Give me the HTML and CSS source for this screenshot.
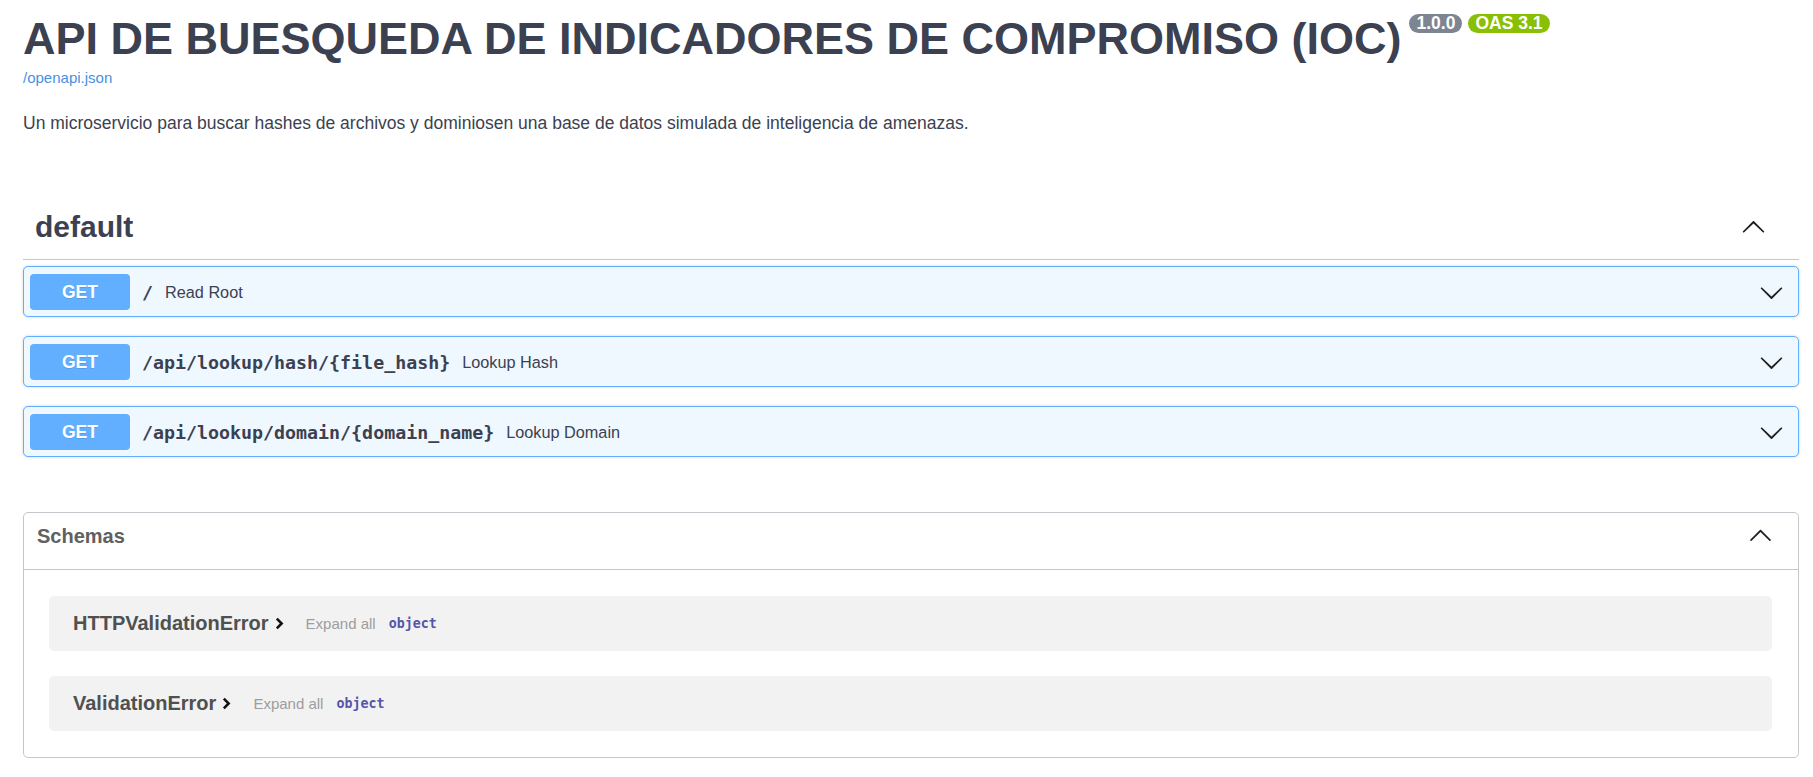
FILE: index.html
```html
<!DOCTYPE html>
<html lang="es">
<head>
<meta charset="utf-8">
<title>API DE BUESQUEDA DE INDICADORES DE COMPROMISO (IOC) - Swagger UI</title>
<link rel="stylesheet" href="styles.css">
</head>
<body>
<div class="wrapper">
  <div class="info">
    <div class="main">
      <h2 class="title"><span class="title-text">API DE BUESQUEDA DE INDICADORES DE COMPROMISO (IOC)</span><span class="badges"><span class="badge">1.0.0</span><span class="badge badge-oas">OAS 3.1</span></span></h2>
      <a class="url" href="#">/openapi.json</a>
    </div>
    <p class="desc">Un microservicio para buscar hashes de archivos y dominiosen una base de datos simulada de inteligencia de amenazas.</p>
  </div>

  <section class="tag-section">
    <h3 class="tag"><span>default</span>
      <svg class="arrow" viewBox="0 0 20 20"><path transform="rotate(180 10 10)" d="M17.418 6.109c.272-.268.709-.268.979 0s.271.701 0 .969l-7.908 7.83c-.27.268-.707.268-.979 0l-7.908-7.83c-.27-.268-.27-.701 0-.969.271-.268.709-.268.979 0L10 13.25l7.418-7.141z"/></svg>
    </h3>

    <div class="opblock">
      <div class="summary">
        <span class="method">GET</span>
        <span class="path">/</span>
        <span class="summary-desc">Read Root</span>
        <svg class="arrow chev" viewBox="0 0 20 20"><path d="M17.418 6.109c.272-.268.709-.268.979 0s.271.701 0 .969l-7.908 7.83c-.27.268-.707.268-.979 0l-7.908-7.830c-.27-.268-.27-.701 0-.969.271-.268.709-.268.979 0L10 13.25l7.418-7.141z"/></svg>
      </div>
    </div>

    <div class="opblock">
      <div class="summary">
        <span class="method">GET</span>
        <span class="path">/api/lookup/hash/{file_hash}</span>
        <span class="summary-desc">Lookup Hash</span>
        <svg class="arrow chev" viewBox="0 0 20 20"><path d="M17.418 6.109c.272-.268.709-.268.979 0s.271.701 0 .969l-7.908 7.83c-.27.268-.707.268-.979 0l-7.908-7.830c-.27-.268-.27-.701 0-.969.271-.268.709-.268.979 0L10 13.25l7.418-7.141z"/></svg>
      </div>
    </div>

    <div class="opblock">
      <div class="summary">
        <span class="method">GET</span>
        <span class="path">/api/lookup/domain/{domain_name}</span>
        <span class="summary-desc">Lookup Domain</span>
        <svg class="arrow chev" viewBox="0 0 20 20"><path d="M17.418 6.109c.272-.268.709-.268.979 0s.271.701 0 .969l-7.908 7.83c-.27.268-.707.268-.979 0l-7.908-7.830c-.27-.268-.27-.701 0-.969.271-.268.709-.268.979 0L10 13.25l7.418-7.141z"/></svg>
      </div>
    </div>
  </section>

  <section class="models">
    <h4 class="models-head"><span>Schemas</span>
      <svg class="arrow" viewBox="0 0 20 20"><path transform="rotate(180 10 10)" d="M17.418 6.109c.272-.268.709-.268.979 0s.271.701 0 .969l-7.908 7.83c-.27.268-.707.268-.979 0l-7.908-7.83c-.27-.268-.27-.701 0-.969.271-.268.709-.268.979 0L10 13.25l7.418-7.141z"/></svg>
    </h4>
    <div class="models-body">
      <div class="model">
        <span class="model-title">HTTPValidationError</span>
        <svg class="toggle" viewBox="0 0 10 14"><path d="M2.5 2.5 L7 7 L2.5 11.5" fill="none" stroke="#111" stroke-width="2.4"/></svg>
        <span class="expand">Expand all</span>
        <span class="type">object</span>
      </div>
      <div class="model">
        <span class="model-title">ValidationError</span>
        <svg class="toggle" viewBox="0 0 10 14"><path d="M2.5 2.5 L7 7 L2.5 11.5" fill="none" stroke="#111" stroke-width="2.4"/></svg>
        <span class="expand">Expand all</span>
        <span class="type">object</span>
      </div>
    </div>
  </section>
</div>
</body>
</html>
```

FILE: styles.css
```css
* {
  box-sizing: border-box;
}

html,
body {
  margin: 0;
  padding: 0;
  background: #ffffff;
}

body {
  font-family: "Liberation Sans", Arial, sans-serif;
  color: #3b4151;
}

.wrapper {
  padding: 0 14px 40px 23px;
}

/* ---------- info ---------- */
.info {
  padding-top: 13px;
}

.main {
  display: flex;
  flex-direction: column;
  align-items: flex-start;
}

.title {
  display: flex;
  align-items: flex-start;
  margin: 0;
  font-size: 45px;
  line-height: 52px;
  font-weight: 700;
  color: #3b4151;
}

.badges {
  display: flex;
  gap: 6px;
  margin: 1px 0 0 8px;
}

.badge {
  display: block;
  font-size: 17.5px;
  line-height: 15px;
  padding: 2px 7px;
  border-radius: 57px;
  background: #7d8492;
  color: #ffffff;
  font-weight: 700;
}

.badge-oas {
  background: #89bf04;
}

.url {
  margin-top: 3px;
  font-size: 15px;
  line-height: 20px;
  color: #4990e2;
  text-decoration: none;
}

.desc {
  margin: 25px 0 0;
  font-size: 17.5px;
  line-height: 20px;
  color: #3b4151;
}

/* ---------- tag ---------- */
.tag-section {
  margin-top: 66px;
}

.tag {
  display: flex;
  align-items: center;
  justify-content: space-between;
  height: 61px;
  margin: 0 0 6px;
  padding: 10px 33px 14px 12px;
  border-bottom: 1px solid #c4c6cb;
  font-size: 30px;
  font-weight: 700;
  color: #3b4151;
}

.arrow {
  width: 25px;
  height: 25px;
  flex: none;
  fill: #1f1f1f;
}

/* ---------- operations ---------- */
.opblock {
  margin-bottom: 19px;
  border: 1px solid #61affe;
  border-radius: 5px;
  background: #eff7ff;
  box-shadow: 0 0 3px rgba(0, 0, 0, 0.19);
}

.summary {
  display: flex;
  align-items: center;
  padding: 7px 6px 6px 6px;
}

.method {
  display: flex;
  align-items: center;
  justify-content: center;
  width: 100px;
  height: 36px;
  flex: none;
  background: #61affe;
  border-radius: 4px;
  color: #ffffff;
  font-size: 17.5px;
  font-weight: 700;
  text-shadow: 0 1px 0 rgba(0, 0, 0, 0.1);
}

.path {
  padding: 0 12px;
  font-family: "DejaVu Sans Mono", "Liberation Mono", monospace;
  font-weight: 700;
  font-size: 18.3px;
  color: #3b4151;
}

.summary-desc {
  flex: 1;
  font-size: 16.25px;
  color: #3b4151;
}

.chev {
  margin-right: 8px;
}

/* ---------- models ---------- */
.models {
  margin-top: 55px;
  border: 1px solid #c4c6cb;
  border-radius: 5px;
}

.models-head {
  display: flex;
  align-items: center;
  justify-content: space-between;
  margin: 0;
  padding: 11px 25px 21px 13px;
  border-bottom: 1px solid #c4c6cb;
  font-size: 20px;
  line-height: 24px;
  font-weight: 700;
  color: #606060;
}

.models-head .arrow {
  height: 24px;
}

.models-body {
  display: flex;
  flex-direction: column;
  gap: 25px;
  padding: 26px 26px 26px 25px;
}

.model {
  display: flex;
  align-items: center;
  height: 55px;
  padding: 0 24px;
  background: #f2f2f2;
  border-radius: 5px;
}

.model-title {
  font-size: 20px;
  font-weight: 700;
  color: #505050;
}

.toggle {
  width: 11px;
  height: 15px;
  margin-left: 5px;
  flex: none;
}

.expand {
  margin-left: 21px;
  font-size: 15px;
  color: #9d9d9d;
}

.type {
  margin-left: 13px;
  font-family: "DejaVu Sans Mono", "Liberation Mono", monospace;
  font-weight: 700;
  font-size: 13.3px;
  color: #5555aa;
}
```
